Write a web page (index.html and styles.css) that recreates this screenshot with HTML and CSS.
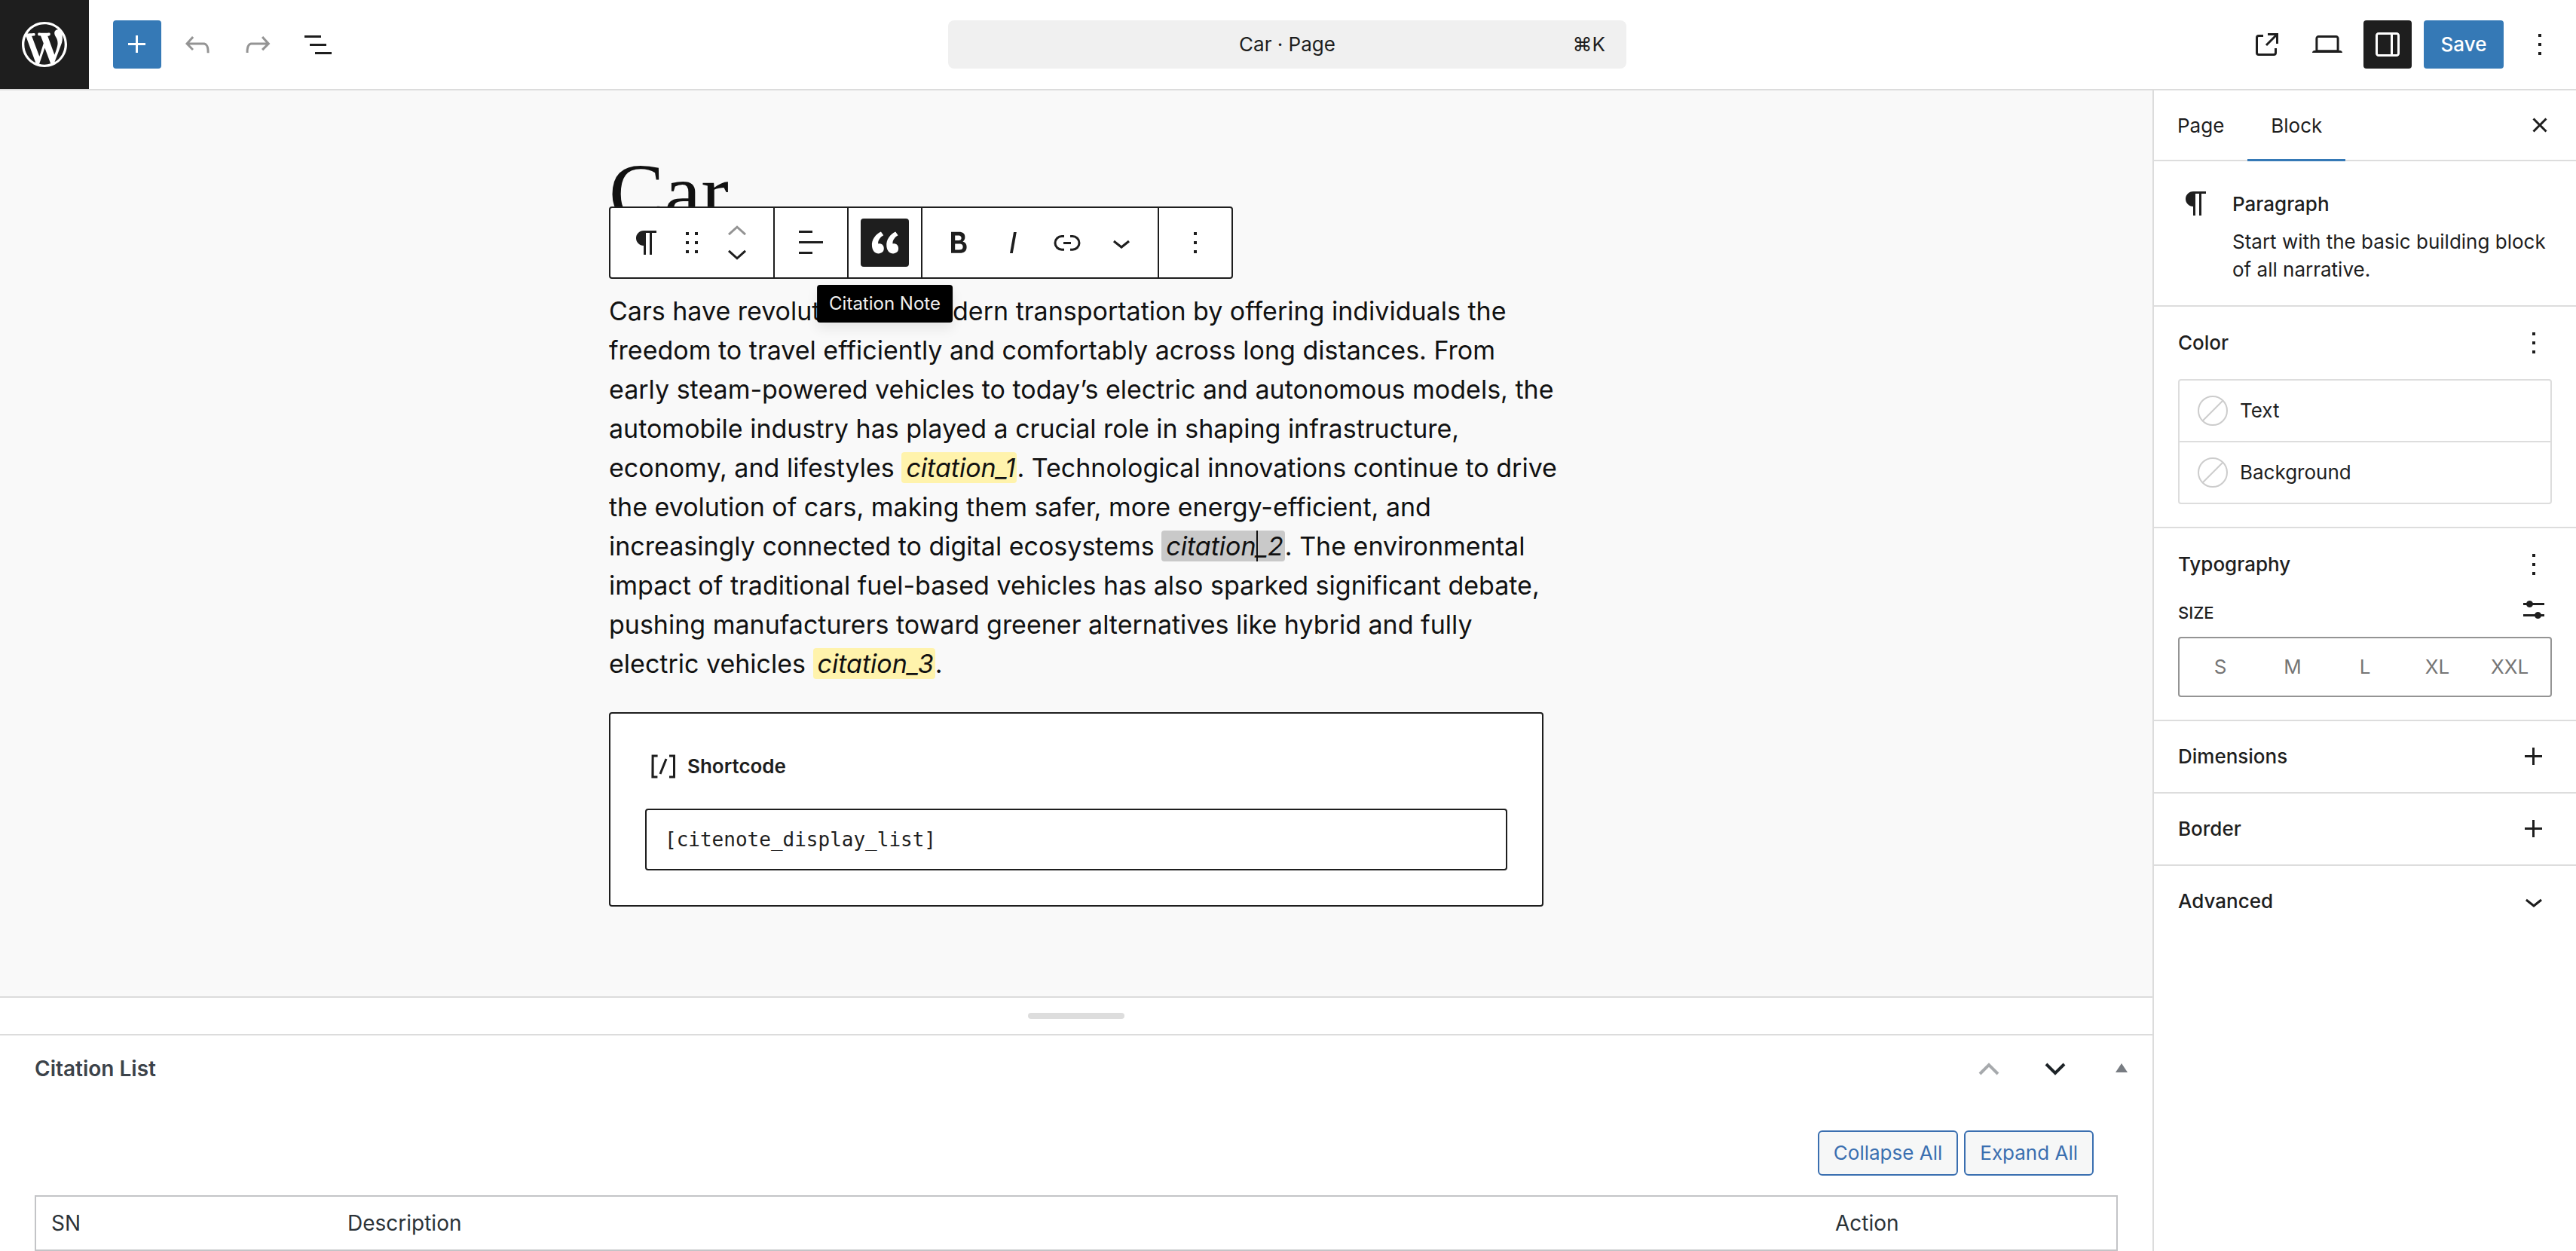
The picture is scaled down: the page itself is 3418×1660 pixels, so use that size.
FILE: index.html
```html
<!DOCTYPE html>
<html lang="en">
<head>
<meta charset="utf-8">
<title>Car · Page</title>
<link rel="stylesheet" href="styles.css">
</head>
<body>
<header class="topbar">
  <a class="site-logo" href="#" aria-label="View pages"><svg viewBox="-2 -2 24 24"><path d="M20 10c0-5.51-4.49-10-10-10C4.48 0 0 4.49 0 10c0 5.52 4.48 10 10 10 5.51 0 10-4.48 10-10zM7.78 15.37L4.37 6.22c.55-.02 1.17-.08 1.17-.08.5-.06.44-1.13-.06-1.11 0 0-1.45.11-2.37.11-.18 0-.37 0-.58-.01C4.12 2.69 6.87 1.11 10 1.11c2.33 0 4.45.87 6.05 2.34-.68-.11-1.65.39-1.65 1.58 0 .74.45 1.36.9 2.1.35.61.55 1.36.55 2.46 0 1.49-1.4 5-1.4 5l-3.03-8.37c.54-.02.82-.17.82-.17.5-.05.44-1.25-.06-1.22 0 0-1.44.12-2.38.12-.87 0-2.33-.12-2.33-.12-.5-.03-.56 1.2-.06 1.22l.92.08 1.26 3.41zM17.41 10c.24-.64.74-1.87.43-4.25.7 1.29 1.05 2.71 1.05 4.25 0 3.29-1.73 6.24-4.4 7.78.97-2.59 1.94-5.2 2.92-7.78zM6.1 18.09C3.12 16.65 1.11 13.53 1.11 10c0-1.3.23-2.48.72-3.59C3.25 10.3 4.67 14.2 6.1 18.09zm4.03-6.63l2.58 6.98c-.86.29-1.76.45-2.71.45-.79 0-1.57-.11-2.29-.33.81-2.38 1.62-4.74 2.42-7.1z"/></svg></a>
  <div class="tools">
    <button class="icon-btn primary" aria-label="Block inserter"><svg viewBox="0 0 24 24"><path d="M11 12.5V17.5H12.5V12.5H17.5V11H12.5V6H11V11H6V12.5H11Z"/></svg></button>
    <button class="icon-btn muted" aria-label="Undo"><svg viewBox="0 0 24 24"><path d="M18.3 11.7c-.6-.6-1.4-.9-2.3-.9H6.7l2.9-3.3-1.1-1-4.5 5L8.5 16l1-1-2.7-2.7H16c.5 0 .9.2 1.3.5 1 1 1 3.4 1 4.5v.3h1.5v-.2c0-1.5 0-4.3-1.5-5.7z"/></svg></button>
    <button class="icon-btn muted" aria-label="Redo"><svg viewBox="0 0 24 24"><path d="M15.6 6.5l-1.1 1 2.9 3.3H8c-.9 0-1.7.3-2.3.9-1.4 1.5-1.4 4.2-1.4 5.6v.2h1.5v-.3c0-1.1 0-3.5 1-4.5.3-.3.7-.5 1.3-.5h9.2L14.5 15l1.1 1.1 4.6-4.6-4.6-5z"/></svg></button>
    <button class="icon-btn" aria-label="Document overview"><svg viewBox="0 0 24 24"><path d="M3 6h11v1.5H3V6Zm3.5 5.5h11V13h-11v-1.5ZM21 17H10v1.5h11V17Z"/></svg></button>
  </div>
  <button class="command"><span></span><span>Car · Page</span><span class="shortcut">⌘K</span></button>
  <div class="actions">
    <a class="icon-btn" href="#" aria-label="View page"><svg viewBox="0 0 24 24"><path d="M19.5 4.5h-7V6h4.44l-5.97 5.97 1.06 1.06L18 7.06v4.44h1.5v-7Zm-13 1a2 2 0 0 0-2 2v10a2 2 0 0 0 2 2h10a2 2 0 0 0 2-2v-3H17v3a.5.5 0 0 1-.5.5h-10a.5.5 0 0 1-.5-.5v-10a.5.5 0 0 1 .5-.5h3V5.5h-3Z"/></svg></a>
    <button class="icon-btn" aria-label="View"><svg viewBox="0 0 24 24"><path d="M20.5 16h-.7V8c0-1.1-.9-2-2-2H6.2c-1.1 0-2 .9-2 2v8h-.7c-.8 0-1.5.7-1.5 1.5h20c0-.8-.7-1.5-1.5-1.5zM5.7 8c0-.3.2-.5.5-.5h11.6c.3 0 .5.2.5.5v7.6H5.7V8z"/></svg></button>
    <button class="icon-btn pressed" aria-label="Settings"><svg viewBox="0 0 24 24"><path fill-rule="evenodd" d="M18 4H6c-1.1 0-2 .9-2 2v12c0 1.1.9 2 2 2h12c1.1 0 2-.9 2-2V6c0-1.1-.9-2-2-2zm-4 14.5H6c-.3 0-.5-.2-.5-.5V6c0-.3.2-.5.5-.5h8v13zm4.5-.5c0 .3-.2.5-.5.5h-2.5v-13H18c.3 0 .5.2.5.5v12z"/></svg></button>
    <button class="save">Save</button>
    <button class="icon-btn" aria-label="Options"><svg viewBox="0 0 24 24"><path d="M13 19h-2v-2h2v2zm0-6h-2v-2h2v2zm0-6h-2V5h2v2z"/></svg></button>
  </div>
</header>

<div class="workspace">
  <main class="editor">
    <section class="canvas">
      <article class="content">
        <h1 class="title">Car</h1>
        <div class="paragraph-block">
          <div class="block-toolbar" role="toolbar">
            <div class="group">
              <button class="tool" aria-label="Paragraph"><svg viewBox="0 0 24 24"><path d="m9.99609 14v-.2251l.00391.0001v6.225h1.5v-14.5h2.5v14.5h1.5v-14.5h3v-1.5h-8.50391c-2.76142 0-5 2.23858-5 5 0 2.7614 2.23858 5 5 5z"/></svg></button>
              <button class="tool narrow" aria-label="Drag"><svg viewBox="0 0 24 24"><path d="M8 7h2V5H8v2zm0 6h2v-2H8v2zm0 6h2v-2H8v2zm6-14v2h2V5h-2zm0 8h2v-2h-2v2zm0 6h2v-2h-2v2z"/></svg></button>
              <div class="movers">
                <button class="mover muted" aria-label="Move up"><svg viewBox="0 0 24 12"><path d="M6.5 8.6 12 3.6l5.5 5" class="stroke"/></svg></button>
                <button class="mover" aria-label="Move down"><svg viewBox="0 0 24 12"><path d="M6.5 3.4l5.5 5 5.5-5" class="stroke"/></svg></button>
              </div>
            </div>
            <div class="group">
              <button class="tool" aria-label="Align text"><svg viewBox="0 0 24 24"><path d="M13 5.5H4V4h9v1.5Zm7 7H4V11h16v1.5Zm-7 7H4V18h9v1.5Z"/></svg></button>
            </div>
            <div class="group">
              <button class="tool" aria-label="Citation Note"><span class="tool-active"><svg viewBox="0 0 20 20"><path d="M9.49 13.22c0-.74-.2-1.38-.61-1.9-.62-.78-1.83-.88-2.53-.72-.29-1.65 1.11-3.75 2.92-4.65L7.88 4c-2.73 1.3-5.42 4.28-4.96 8.05C3.21 14.43 4.59 16 6.54 16c.85 0 1.56-.25 2.12-.75s.83-1.18.83-2.03zm8.05 0c0-.74-.2-1.38-.61-1.9-.63-.78-1.83-.88-2.53-.72-.29-1.65 1.11-3.75 2.92-4.65L15.93 4c-2.73 1.3-5.41 4.28-4.95 8.05.29 2.38 1.66 3.95 3.61 3.95.85 0 1.56-.25 2.12-.75s.83-1.18.83-2.03z"/></svg></span></button>
              <span class="tooltip" role="tooltip">Citation Note</span>
            </div>
            <div class="group">
              <button class="tool" aria-label="Bold"><svg viewBox="0 0 24 24"><path d="M14.7 11.3c1-.6 1.5-1.6 1.5-3 0-2.3-1.3-3.4-4-3.4H7v14h5.8c1.4 0 2.5-.3 3.3-1 .8-.7 1.2-1.7 1.2-2.9.1-1.9-.8-3.1-2.6-3.7zm-5.1-4h2.3c.6 0 1.1.1 1.4.4.3.3.5.7.5 1.2s-.2 1-.5 1.2c-.3.3-.8.4-1.4.4H9.6V7.3zm4.6 9c-.4.3-1 .4-1.7.4H9.6v-3.9h2.9c.7 0 1.3.2 1.7.5.4.3.6.8.6 1.5s-.2 1.2-.6 1.5z"/></svg></button>
              <button class="tool" aria-label="Italic"><svg viewBox="0 0 24 24"><path d="M12.5 5L10 19h1.9l2.5-14z"/></svg></button>
              <button class="tool" aria-label="Link"><svg viewBox="0 0 24 24"><path d="M10 17.389H8.444A5.194 5.194 0 1 1 8.444 7H10v1.5H8.444a3.694 3.694 0 0 0 0 7.389H10v1.5ZM14 7h1.556a5.194 5.194 0 0 1 0 10.39H14v-1.5h1.556a3.694 3.694 0 0 0 0-7.39H14V7Zm-4.5 6h5v-1.5h-5V13Z"/></svg></button>
              <button class="tool" aria-label="More"><svg viewBox="0 0 24 24"><path d="M17.5 11.6L12 16l-5.5-4.4.9-1.2L12 14l4.5-3.6 1 1.2z"/></svg></button>
            </div>
            <div class="group">
              <button class="tool" aria-label="Options"><svg viewBox="0 0 24 24"><path d="M13 19h-2v-2h2v2zm0-6h-2v-2h2v2zm0-6h-2V5h2v2z"/></svg></button>
            </div>
          </div>
          <p class="paragraph">Cars have revolutionized modern transportation by offering individuals the<br>freedom to travel efficiently and comfortably across long distances. From<br>early steam-powered vehicles to today’s electric and autonomous models, the<br>automobile industry has played a crucial role in shaping infrastructure,<br>economy, and lifestyles <em class="cite">citation_1</em>. Technological innovations continue to drive<br>the evolution of cars, making them safer, more energy-efficient, and<br>increasingly connected to digital ecosystems <em class="cite current">citation<span class="caret"></span>_2</em>. The environmental<br>impact of traditional fuel-based vehicles has also sparked significant debate,<br>pushing manufacturers toward greener alternatives like hybrid and fully<br>electric vehicles <em class="cite">citation_3</em>.</p>
        </div>
        <div class="shortcode">
          <label class="shortcode-label" for="code"><svg viewBox="0 0 24 24"><path d="M16 4.2v1.5h2.5v12.5H16v1.5h4V4.2h-4zM4.2 19.8h4v-1.5H5.8V5.8h2.5V4.2h-4l-.1 15.6zm5.1-3.1l1.4.6 4-10-1.4-.6-4 10z"/></svg>Shortcode</label>
          <input class="shortcode-input" id="code" type="text" value="[citenote_display_list]">
        </div>
      </article>
    </section>
    <section class="metaboxes">
      <div class="resizer"><button class="handle" aria-label="Resize"></button></div>
      <div class="metabox">
        <div class="metabox-head">
          <h2 class="metabox-title">Citation List</h2>
          <div class="metabox-actions">
            <button class="meta-btn faded" aria-label="Move up"><svg viewBox="0 0 40 40"><path d="M8 27 20 15l12 12" class="heavy"/></svg></button>
            <button class="meta-btn" aria-label="Move down"><svg viewBox="0 0 40 40"><path d="M8 14l12 12 12-12" class="heavy"/></svg></button>
            <button class="meta-btn toggle" aria-label="Toggle panel"><svg viewBox="0 0 40 40"><path d="M12 25 20 13l8 12z"/></svg></button>
          </div>
        </div>
        <div class="bulk">
          <button class="outline">Collapse All</button>
          <button class="outline">Expand All</button>
        </div>
        <table class="citations">
          <thead><tr><th class="edge" scope="col">SN</th><th scope="col">Description</th><th class="edge" scope="col">Action</th></tr></thead>
        </table>
      </div>
    </section>
  </main>

  <aside class="sidebar">
    <div class="tabs">
      <button class="tab">Page</button>
      <button class="tab active">Block</button>
      <button class="icon-btn close" aria-label="Close settings"><svg viewBox="0 0 24 24"><path d="M12 13.06l3.712 3.713 1.061-1.06L13.061 12l3.712-3.712-1.06-1.06L12 10.938 8.288 7.227l-1.061 1.06L10.939 12l-3.712 3.712 1.06 1.061L12 13.061z"/></svg></button>
    </div>
    <div class="card">
      <svg viewBox="0 0 24 24"><path d="m9.99609 14v-.2251l.00391.0001v6.225h1.5v-14.5h2.5v14.5h1.5v-14.5h3v-1.5h-8.50391c-2.76142 0-5 2.23858-5 5 0 2.7614 2.23858 5 5 5z"/></svg>
      <div>
        <h2 class="card-name">Paragraph</h2>
        <p class="card-text">Start with the basic building block<br>of all narrative.</p>
      </div>
    </div>
    <section class="panel">
      <div class="panel-head"><h2 class="panel-title">Color</h2><button class="small-btn" aria-label="Color options"><svg viewBox="0 0 24 24"><path d="M13 19h-2v-2h2v2zm0-6h-2v-2h2v2zm0-6h-2V5h2v2z"/></svg></button></div>
      <div class="colors">
        <button class="color-row"><svg class="swatch" viewBox="0 0 40 40"><circle cx="20" cy="20" r="19"/><path d="M6.5 33.5 33.5 6.5"/></svg>Text</button>
        <button class="color-row"><svg class="swatch" viewBox="0 0 40 40"><circle cx="20" cy="20" r="19"/><path d="M6.5 33.5 33.5 6.5"/></svg>Background</button>
      </div>
    </section>
    <section class="panel">
      <div class="panel-head"><h2 class="panel-title">Typography</h2><button class="small-btn" aria-label="Typography options"><svg viewBox="0 0 24 24"><path d="M13 19h-2v-2h2v2zm0-6h-2v-2h2v2zm0-6h-2V5h2v2z"/></svg></button></div>
      <div class="size-head"><span class="size-label">SIZE</span><button class="small-btn" aria-label="Set custom size"><svg viewBox="0 0 24 24"><path d="m19 7.5h-7.628c-.3089-.87389-1.1423-1.5-2.122-1.5-.97966 0-1.81309.62611-2.12197 1.5h-2.12803v1.5h2.12803c.30888.87389 1.14231 1.5 2.12197 1.5.9797 0 1.8131-.62611 2.122-1.5h7.628z"/><path d="m19 15h-2.128c-.3089-.8739-1.1423-1.5-2.122-1.5s-1.8131.6261-2.122 1.5h-7.628v1.5h7.628c.3089.8739 1.1423 1.5 2.122 1.5s1.8131-.6261 2.122-1.5h2.128z"/></svg></button></div>
      <div class="sizes">
        <button class="size">S</button><button class="size">M</button><button class="size">L</button><button class="size">XL</button><button class="size">XXL</button>
      </div>
    </section>
    <section class="panel row"><h2 class="panel-title">Dimensions</h2><button class="small-btn" aria-label="Dimensions options"><svg viewBox="0 0 24 24"><path d="M11 12.5V17.5H12.5V12.5H17.5V11H12.5V6H11V11H6V12.5H11Z"/></svg></button></section>
    <section class="panel row"><h2 class="panel-title">Border</h2><button class="small-btn" aria-label="Border options"><svg viewBox="0 0 24 24"><path d="M11 12.5V17.5H12.5V12.5H17.5V11H12.5V6H11V11H6V12.5H11Z"/></svg></button></section>
    <section class="panel row"><h2 class="panel-title">Advanced</h2><button class="small-btn" aria-label="Open Advanced"><svg viewBox="0 0 24 24"><path d="M17.5 11.6L12 16l-5.5-4.4.9-1.2L12 14l4.5-3.6 1 1.2z"/></svg></button></section>
  </aside>
</div>
</body>
</html>
```
FILE: styles.css
```css
* { box-sizing: border-box; }

body {
  margin: 0;
  height: 100vh;
  display: flex;
  flex-direction: column;
  overflow: hidden;
  background: #fff;
  color: #1e1e1e;
  font: 26px/36px Inter, "Liberation Sans", sans-serif;
}

h1, h2, p { margin: 0; }

button {
  margin: 0;
  padding: 0;
  border: 0;
  background: none;
  color: inherit;
  font: inherit;
}

svg { display: block; width: 48px; height: 48px; flex: none; fill: currentColor; }

/* Top bar */
.topbar {
  display: grid;
  grid-template-columns: 118px calc(50% - 569px) 900px 1fr;
  align-items: center;
  height: 120px;
  flex: none;
  border-bottom: 2px solid #dcdcdc;
}
.site-logo {
  display: grid;
  place-items: center;
  width: 118px;
  height: 118px;
  background: #1e1e1e;
  color: #fff;
}
.site-logo svg { width: 72px; height: 72px; }
.tools { display: flex; gap: 16px; padding-left: 32px; }
.icon-btn {
  display: grid;
  place-items: center;
  width: 64px;
  height: 64px;
  border-radius: 4px;
  color: #1e1e1e;
}
.muted { color: #949494; }
.primary { background: #3579b6; color: #fff; }
.pressed { background: #1e1e1e; color: #fff; }
.command {
  display: grid;
  grid-template-columns: 1fr auto 1fr;
  align-items: center;
  height: 64px;
  padding: 0 28px;
  border-radius: 8px;
  background: #f0f0f0;
}
.shortcut { text-align: right; }
.actions { display: flex; justify-content: flex-end; gap: 16px; padding-right: 16px; }
.save {
  width: 106px;
  height: 64px;
  border-radius: 4px;
  background: #3579b6;
  color: #fff;
  font-weight: 500;
}

/* Workspace */
.workspace { flex: 1; min-height: 0; display: grid; grid-template-columns: 1fr 562px; }
.editor { display: flex; flex-direction: column; min-width: 0; min-height: 0; }
.canvas { flex: 1; min-height: 0; background: #f9f9f9; color: #111; }
.content { width: 1240px; margin: 0 auto; padding-top: 70px; }
.title {
  font: 400 110px/132px "Liberation Serif", serif;
  margin-bottom: 65px;
}
.paragraph-block { position: relative; }
.paragraph { font-size: 34px; line-height: 52px; white-space: nowrap; margin-bottom: 38px; }
.cite { padding: 0 2px 0 6px; border-radius: 4px; background: #fff3ac; }
.current { background: #c9c9c9; }
.caret { display: inline-block; width: 2px; height: 41px; margin-right: -2px; vertical-align: -8px; background: #111; }

/* Floating block toolbar */
.block-toolbar {
  position: absolute;
  left: 0;
  bottom: calc(100% + 17px);
  display: flex;
  height: 96px;
  border: 2px solid #1e1e1e;
  border-radius: 4px;
  background: #fff;
  color: #1e1e1e;
}
.group { position: relative; display: flex; align-items: center; padding: 0 12px; }
.group + .group { border-left: 2px solid #1e1e1e; }
.tool { display: grid; place-items: center; width: 72px; height: 92px; }
.narrow { width: 48px; }
.tool-active {
  display: grid;
  place-items: center;
  width: 64px;
  height: 64px;
  border-radius: 4px;
  background: #1e1e1e;
  color: #fff;
}
.movers { display: flex; flex-direction: column; gap: 8px; }
.mover { width: 72px; }
.mover svg { width: 48px; height: 24px; margin: 0 auto; }
.stroke { fill: none; stroke: currentColor; stroke-width: 1.5; }
.tooltip {
  position: absolute;
  top: calc(100% + 10px);
  left: 50%;
  transform: translateX(-50%);
  z-index: 1;
  padding: 7px 16px;
  border-radius: 4px;
  background: #000;
  color: #f0f0f0;
  font-size: 24px;
  white-space: nowrap;
  box-shadow: 0 8px 16px rgba(0, 0, 0, .08);
}

/* Shortcode block */
.shortcode {
  padding: 46px;
  border: 2px solid #1e1e1e;
  border-radius: 4px;
  background: #fff;
  color: #1e1e1e;
}
.shortcode-label { display: flex; align-items: center; gap: 8px; margin-bottom: 32px; font-weight: 600; }
.shortcode-input {
  display: block;
  width: 100%;
  height: 82px;
  padding: 0 24px;
  border: 2px solid #1e1e1e;
  border-radius: 4px;
  background: #fff;
  color: #1e1e1e;
  font: 26px "DejaVu Sans Mono", monospace;
}

/* Meta boxes */
.metaboxes { flex: none; border-top: 2px solid #dcdcdc; }
.resizer { display: flex; height: 50px; align-items: center; justify-content: center; border-bottom: 2px solid #dcdcdc; }
.handle { width: 128px; height: 8px; border-radius: 4px; background: #ddd; }
.metabox { padding: 0 46px; }
.metabox-head { display: flex; align-items: center; justify-content: space-between; height: 88px; }
.metabox-title { font-size: 28px; font-weight: 600; color: #3c434a; }
.metabox-actions { display: flex; gap: 48px; margin-right: -25px; color: #1d2327; }
.metabox-actions svg { width: 40px; height: 40px; }
.heavy { fill: none; stroke: currentColor; stroke-width: 4; }
.faded { color: #a7aaad; }
.toggle { color: #787c82; }
.bulk { display: flex; justify-content: flex-end; gap: 8px; padding: 38px 32px 26px 0; }
.outline {
  height: 60px;
  padding: 0 19px;
  border: 2px solid #3a6fb0;
  border-radius: 6px;
  background: #f6f7f7;
  color: #3a6fb0;
}
.citations {
  width: 100%;
  table-layout: fixed;
  border: 2px solid #c3c4c7;
  border-spacing: 0;
  color: #2c3338;
}
.citations th { height: 70px; padding: 0 20px; text-align: left; font-weight: 400; font-size: 28px; }
.edge { width: 393px; }

/* Settings sidebar */
.sidebar { border-left: 2px solid #dcdcdc; background: #fff; }
.tabs { display: flex; height: 94px; padding-right: 16px; border-bottom: 2px solid #ddd; }
.tab { height: 94px; padding: 0 31px; }
.active { border-bottom: 3px solid #3579b6; padding-top: 3px; }
.close { margin: 14px 0 0 auto; }
.card { display: flex; gap: 24px; padding: 32px 32px 29px; }
.card-name { font-size: 26px; line-height: 50px; font-weight: 500; }
.card-text { margin-top: 6px; line-height: 37px; white-space: nowrap; }
.panel { border-top: 2px solid #ddd; padding: 16px 32px 30px; }
.panel-head { display: flex; align-items: center; justify-content: space-between; height: 64px; }
.panel-title { font-size: 26px; font-weight: 500; }
.small-btn { width: 48px; height: 48px; }
.colors { margin-top: 16px; border: 2px solid #ddd; border-radius: 4px; }
.color-row { display: flex; align-items: center; gap: 16px; width: 100%; height: 80px; padding: 0 24px; }
.color-row + .color-row { height: 82px; border-top: 2px solid #ddd; }
.swatch { width: 40px; height: 40px; fill: none; stroke: #ccc; stroke-width: 2; }
.size-head { display: flex; align-items: flex-end; justify-content: space-between; margin: 4px 0 12px; }
.size-label { font-size: 22px; line-height: 40px; font-weight: 500; }
.sizes { display: grid; grid-template-columns: repeat(5, 1fr); height: 80px; padding: 0 6px; border: 2px solid #949494; border-radius: 4px; color: #757575; }
.row { display: flex; align-items: center; justify-content: space-between; height: 96px; padding-top: 0; padding-bottom: 0; }
```
